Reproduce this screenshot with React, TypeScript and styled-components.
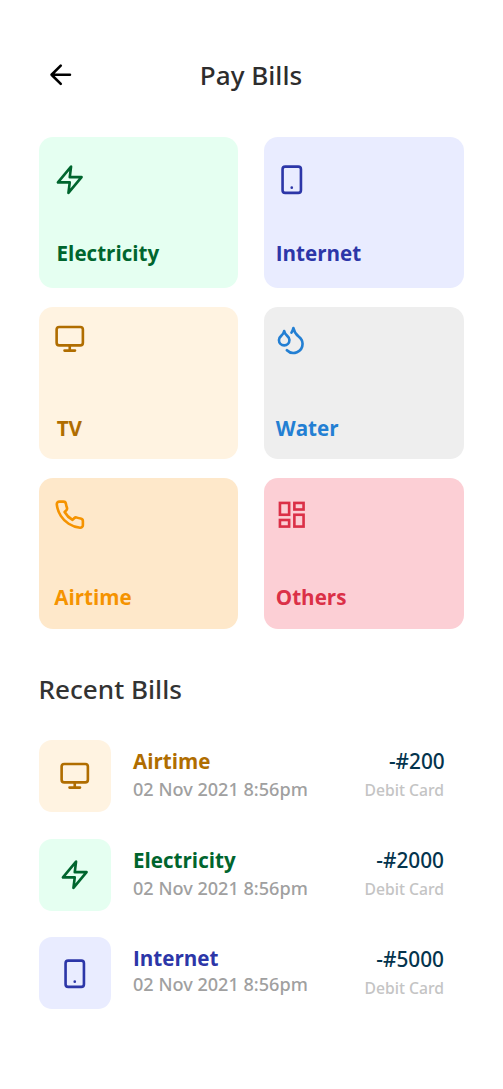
import React from "react";
import styled, { createGlobalStyle } from "styled-components";

const GlobalStyle = createGlobalStyle`
  * { box-sizing: border-box; }
  body {
    margin: 0;
    background: #ffffff;
    font-family: "Noto Sans", "Open Sans", sans-serif;
  }
`;

const Screen = styled.main`
  width: 503px;
  height: 1089px;
  overflow: hidden;
  background: #ffffff;
`;

const Header = styled.header`
  display: grid;
  grid-template-columns: 45px 1fr 45px;
  align-items: center;
  height: 76px;
  margin-top: 37px;
  padding: 0 45px;
`;

const BackButton = styled.button`
  display: flex;
  padding: 0;
  border: 0;
  background: none;
  color: #000000;
`;

const Title = styled.h1`
  margin: 0;
  padding-right: 1px;
  color: #2d2d2d;
  font-size: 26.1px;
  font-weight: 500;
  line-height: 34px;
  text-align: center;
`;

const Glyph = styled.svg`
  display: block;
  flex: none;
  width: 31.5px;
  height: 31.5px;
  fill: none;
  stroke: currentColor;
  stroke-width: 2;
  stroke-linecap: round;
  stroke-linejoin: round;
`;

const Categories = styled.section`
  display: grid;
  grid-template-columns: 199.6px 199.6px;
  grid-template-rows: 150.5px 151.4px 150.7px;
  column-gap: 25.8px;
  row-gap: 19.8px;
  margin: 24px 0 0 38.7px;
`;

const Card = styled.button<{ $bg: string; $fg: string; $top: number; $left: number }>`
  display: flex;
  flex-direction: column;
  justify-content: space-between;
  align-items: flex-start;
  padding: ${(p) => p.$top}px 0 0 ${(p) => p.$left}px;
  border: 0;
  border-radius: 14px;
  background: ${(p) => p.$bg};
  color: ${(p) => p.$fg};
`;

const CardLabel = styled.span<{ $indent: number; $bottom: number }>`
  margin: 0 0 ${(p) => p.$bottom}px ${(p) => p.$indent}px;
  font-family: "Open Sans", sans-serif;
  font-size: 20.6px;
  font-weight: 700;
  line-height: 28px;
`;

const SectionTitle = styled.h2`
  margin: 42.6px 0 0 38.6px;
  color: #333333;
  font-size: 26.1px;
  font-weight: 500;
  line-height: 34px;
`;

const BillList = styled.ul`
  display: flex;
  flex-direction: column;
  gap: 26.6px;
  margin: 34.3px 59px 0 39px;
  padding: 0;
  list-style: none;
`;

const BillRow = styled.li`
  display: flex;
  height: 72px;
`;

const Tile = styled.div<{ $bg: string; $fg: string }>`
  display: flex;
  align-items: center;
  justify-content: center;
  width: 72px;
  height: 72px;
  border-radius: 13px;
  background: ${(p) => p.$bg};
  color: ${(p) => p.$fg};
`;

const BillInfo = styled.div`
  flex: 1;
  padding: 7px 0 0 22px;
`;

const BillName = styled.div<{ $fg: string }>`
  color: ${(p) => p.$fg};
  font-family: "Open Sans", sans-serif;
  font-size: 20.6px;
  font-weight: 700;
  line-height: 28px;
`;

const BillDate = styled.div<{ $gap: number }>`
  margin-top: ${(p) => p.$gap}px;
  color: #a0a0a0;
  font-size: 18.1px;
  font-weight: 500;
  line-height: 24px;
`;

const Payment = styled.div<{ $top: number }>`
  padding-top: ${(p) => p.$top}px;
  text-align: right;
`;

const Amount = styled.div<{ $shift: number }>`
  margin-right: ${(p) => -p.$shift}px;
  color: #04344d;
  font-size: 20.8px;
  font-weight: 500;
  line-height: 28px;
`;

const Method = styled.div`
  margin-top: 4.1px;
  color: #c4c4c4;
  font-size: 15.7px;
  font-weight: 500;
  line-height: 22px;
`;

type IconName = "back" | "bolt" | "mobile" | "monitor" | "drops" | "phone" | "grid";

const shapes: Record<IconName, React.ReactNode> = {
  back: <path d="M19 12H5M12 19l-7-7 7-7" />,
  bolt: <path d="M13 2 3 14h9l-1 8 10-12h-9l1-8z" />,
  mobile: (
    <>
      <rect x="5" y="2" width="14" height="20" rx="2" />
      <path d="M12 18h.01" />
    </>
  ),
  monitor: (
    <>
      <rect x="2" y="3" width="20" height="14" rx="2" />
      <path d="M8 21h8M12 17v4" />
    </>
  ),
  drops: (
    <>
      <path d="M7 16.3c2.2 0 4-1.83 4-4.05 0-1.16-.57-2.26-1.71-3.19S7.29 6.75 7 5.3c-.29 1.45-1.14 2.84-2.29 3.76S3 11.1 3 12.25c0 2.22 1.8 4.05 4 4.05z" />
      <path d="M12.56 6.6A10.97 10.97 0 0 0 14 3.02c.5 2.5 2 4.9 4 6.5s3 3.5 3 5.5a6.98 6.98 0 0 1-11.91 4.97" />
    </>
  ),
  phone: (
    <path d="M22 16.92v3a2 2 0 0 1-2.18 2 19.79 19.79 0 0 1-8.63-3.07 19.5 19.5 0 0 1-6-6 19.79 19.79 0 0 1-3.07-8.67A2 2 0 0 1 4.11 2h3a2 2 0 0 1 2 1.72 12.84 12.84 0 0 0 .7 2.81 2 2 0 0 1-.45 2.11L8.09 9.91a16 16 0 0 0 6 6l1.27-1.27a2 2 0 0 1 2.11-.45 12.84 12.84 0 0 0 2.81.7A2 2 0 0 1 22 16.92z" />
  ),
  grid: (
    <g strokeLinejoin="miter">
      <rect x="3" y="3" width="7" height="9" />
      <rect x="14" y="3" width="7" height="5" />
      <rect x="14" y="12" width="7" height="9" />
      <rect x="3" y="16" width="7" height="5" />
    </g>
  ),
};

const Icon = ({ name }: { name: IconName }) => (
  <Glyph viewBox="0 0 24 24" aria-hidden="true">
    {shapes[name]}
  </Glyph>
);

interface Category {
  label: string;
  icon: IconName;
  bg: string;
  fg: string;
  top: number;
  left: number;
  indent: number;
  bottom: number;
}

const categories: Category[] = [
  { label: "Electricity", icon: "bolt", bg: "#e5fff1", fg: "#00652e", top: 26.5, left: 15.3, indent: 2.6, bottom: 20.3 },
  { label: "Internet", icon: "mobile", bg: "#e9ecff", fg: "#2c36a8", top: 26.5, left: 11.5, indent: 0.2, bottom: 20.3 },
  { label: "TV", icon: "monitor", bg: "#fff3e1", fg: "#b06d00", top: 16, left: 15, indent: 3, bottom: 16.3 },
  { label: "Water", icon: "drops", bg: "#eeeeee", fg: "#237fd3", top: 16.3, left: 11.2, indent: 0.5, bottom: 16.3 },
  { label: "Airtime", icon: "phone", bg: "#fee8ca", fg: "#f59300", top: 20.3, left: 15, indent: 0.5, bottom: 18 },
  { label: "Others", icon: "grid", bg: "#fccfd5", fg: "#db3047", top: 20.3, left: 11.5, indent: 0.2, bottom: 18 },
];

const bills = [
  { name: "Airtime", icon: "monitor" as IconName, bg: "#fff3e1", fg: "#b06d00", amount: "-#200", gap: 2, top: 6.9, shift: 0.7 },
  { name: "Electricity", icon: "bolt" as IconName, bg: "#e5fff1", fg: "#00652e", amount: "-#2000", gap: 2, top: 7.2, shift: 0 },
  { name: "Internet", icon: "mobile" as IconName, bg: "#e9ecff", fg: "#2c36a8", amount: "-#5000", gap: -0.5, top: 7.8, shift: 0 },
];

export default function App() {
  return (
    <>
      <GlobalStyle />
      <Screen>
        <Header>
          <BackButton aria-label="Back">
            <Icon name="back" />
          </BackButton>
          <Title>Pay Bills</Title>
        </Header>
        <Categories>
          {categories.map((c) => (
            <Card key={c.label} $bg={c.bg} $fg={c.fg} $top={c.top} $left={c.left}>
              <Icon name={c.icon} />
              <CardLabel $indent={c.indent} $bottom={c.bottom}>
                {c.label}
              </CardLabel>
            </Card>
          ))}
        </Categories>
        <SectionTitle>Recent Bills</SectionTitle>
        <BillList>
          {bills.map((b) => (
            <BillRow key={b.name}>
              <Tile $bg={b.bg} $fg={b.fg}>
                <Icon name={b.icon} />
              </Tile>
              <BillInfo>
                <BillName $fg={b.fg}>{b.name}</BillName>
                <BillDate $gap={b.gap}>02 Nov 2021 8:56pm</BillDate>
              </BillInfo>
              <Payment $top={b.top}>
                <Amount $shift={b.shift}>{b.amount}</Amount>
                <Method>Debit Card</Method>
              </Payment>
            </BillRow>
          ))}
        </BillList>
      </Screen>
    </>
  );
}
